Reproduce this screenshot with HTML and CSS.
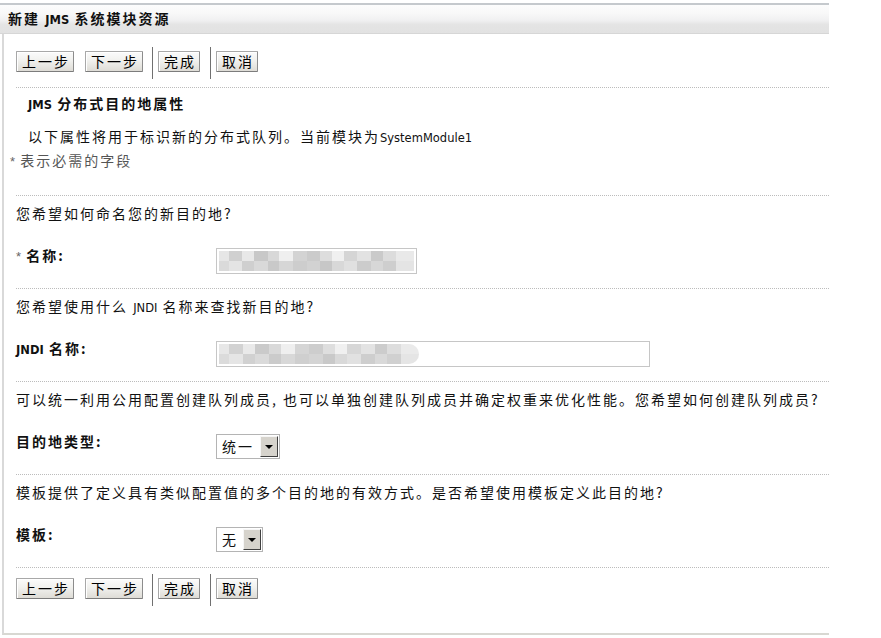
FILE: index.html
```html
<!DOCTYPE html>
<html lang="zh-CN">
<head>
<meta charset="utf-8">
<title>新建 JMS 系统模块资源</title>
<link rel="stylesheet" href="styles.css">
</head>
<body>
<div class="panel">
  <div class="header">
    <h1 class="title">新建 <span class="lat">JMS</span> 系统模块资源</h1>
  </div>
  <div class="content">
    <div class="toolbar">
      <button class="btn">上一步</button>
      <button class="btn gap-l">下一步</button>
      <span class="sep"></span>
      <button class="btn">完成</button>
      <span class="sep sep-wide"></span>
      <button class="btn">取消</button>
    </div>

    <div class="intro">
      <h2 class="subhead"><span class="lat">JMS</span> 分布式目的地属性</h2>
      <p class="desc">以下属性将用于标识新的分布式队列。当前模块为<span class="lat">SystemModule1</span></p>
      <p class="req"><span class="star">*</span> 表示必需的字段</p>
    </div>

    <div class="section">
      <p class="question">您希望如何命名您的新目的地?</p>
      <div class="field-row">
        <label class="label"><span class="star">*</span> 名称:</label>
        <div class="input input-name"><div class="blur"></div></div>
      </div>
    </div>

    <div class="section">
      <p class="question">您希望使用什么 <span class="lat">JNDI</span> 名称来查找新目的地?</p>
      <div class="field-row">
        <label class="label"><span class="lat">JNDI</span> 名称:</label>
        <div class="input input-jndi"><div class="blur blur-short"></div></div>
      </div>
    </div>

    <div class="section">
      <p class="question">可以统一利用公用配置创建队列成员, 也可以单独创建队列成员并确定权重来优化性能。您希望如何创建队列成员?</p>
      <div class="field-row">
        <label class="label">目的地类型:</label>
        <div class="select select-type"><span class="select-text">统一</span><span class="arrow"><span class="tri"></span></span></div>
      </div>
    </div>

    <div class="section">
      <p class="question">模板提供了定义具有类似配置值的多个目的地的有效方式。是否希望使用模板定义此目的地?</p>
      <div class="field-row">
        <label class="label">模板:</label>
        <div class="select select-tpl"><span class="select-text">无</span><span class="arrow"><span class="tri"></span></span></div>
      </div>
    </div>

    <div class="footer">
      <div class="toolbar">
        <button class="btn">上一步</button>
        <button class="btn gap-l">下一步</button>
        <span class="sep"></span>
        <button class="btn">完成</button>
        <span class="sep sep-wide"></span>
        <button class="btn">取消</button>
      </div>
    </div>
  </div>
</div>
</body>
</html>
```
FILE: styles.css
```css
* { box-sizing: border-box; }

body {
  margin: 0;
  background: #ffffff;
  color: #111111;
  font-family: "Noto Sans CJK SC", "Noto Sans", sans-serif;
  font-size: 14px;
  letter-spacing: 2px;
}

h1, h2, p { margin: 0; font-size: inherit; }

.lat {
  font-family: "DejaVu Sans", "Liberation Sans", sans-serif;
  font-size: 11.5px;
  letter-spacing: 0;
  line-height: 1;
}

.panel {
  width: 829px;
  padding-top: 3px;
}

.header {
  height: 31px;
  border-top: 2px solid #c5c9cd;
  border-bottom: 1px solid #d6d6d6;
  background: linear-gradient(#fcfcfc 0%, #f8f8f8 30%, #f0f0f1 55%, #e4e4e4 70%, #e2e2e2 100%);
  padding-left: 8px;
}

.title {
  font-weight: bold;
  line-height: 27px;
  height: 27px;
}

.content {
  margin-left: 2px;
  border-left: 2px solid #d9d9d9;
  border-bottom: 2px solid #d8d8d2;
  padding: 13px 0 0 12px;
}

.toolbar {
  display: flex;
  align-items: flex-start;
  height: 32px;
  margin-bottom: 8px;
}

.btn {
  font: inherit;
  letter-spacing: 2px;
  color: #000;
  height: 21px;
  margin: 4px 0 0;
  padding: 0 3px 0 5px;
  line-height: 19px;
  border: 1px solid #a8a8a8;
  border-bottom-color: #7c7c7c;
  border-right-color: #8c8c8c;
  border-radius: 1px;
  background: linear-gradient(#fbfbfb 0%, #f1f1ee 45%, #dedcd6 100%);
  box-shadow: inset 1px 1px 0 #ffffff;
}

.gap-l { margin-left: 11px; }

.sep {
  width: 1px;
  height: 32px;
  background: #707070;
  margin: 0 5px 0 9px;
}

.sep-wide { margin-left: 10px; }

.intro {
  border-top: 1px dotted #bcbcbc;
  padding: 5px 0 25px;
}

.subhead {
  font-weight: bold;
  line-height: 20px;
  height: 20px;
  padding-left: 12px;
}

.desc {
  margin-top: 13px;
  line-height: 20px;
  height: 20px;
  padding-left: 12px;
}

.req {
  margin-top: 4px;
  margin-left: -6px;
  line-height: 20px;
  height: 20px;
  color: #555555;
}

.star {
  font-family: "Liberation Sans", sans-serif;
  color: #666666;
  font-size: 13px;
  letter-spacing: 0;
  font-weight: normal;
  line-height: 1;
}

.section {
  border-top: 1px dotted #bcbcbc;
  padding: 7px 0 14px;
}

.question {
  line-height: 20px;
  height: 20px;
  white-space: nowrap;
}

.field-row {
  display: flex;
  align-items: flex-start;
  height: 26px;
  margin-top: 25px;
}

.label {
  flex: none;
  width: 200px;
  height: 20px;
  font-weight: bold;
  line-height: 20px;
  margin-top: -3px;
}

.input {
  height: 26px;
  border: 1px solid #c6c6c6;
  background: #ffffff;
  padding: 2px;
}

.input-name { width: 201px; }
.input-jndi { width: 434px; }

.blur {
  height: 100%;
  width: 100%;
  background:
    linear-gradient(90deg, #e6e6e6 0 5%, #d0d0d0 5% 12%, #e8e8e8 12% 18%, #c8c8c8 18% 25%, #d8d8d8 25% 31%, #efefef 31% 38%, #d3d3d3 38% 45%, #cbcbcb 45% 52%, #dddddd 52% 58%, #f0f0f0 58% 64%, #d5d5d5 64% 71%, #e2e2e2 71% 78%, #cacaca 78% 84%, #dcdcdc 84% 91%, #e9e9e9 91% 100%) top / 100% 50% no-repeat,
    linear-gradient(90deg, #dadada 0 5%, #e4e4e4 5% 12%, #cfcfcf 12% 18%, #d9d9d9 18% 25%, #c9c9c9 25% 31%, #d6d6d6 31% 38%, #cdcdcd 38% 45%, #d2d2d2 45% 52%, #c7c7c7 52% 58%, #d8d8d8 58% 64%, #e0e0e0 64% 71%, #cccccc 71% 78%, #d7d7d7 78% 84%, #cecece 84% 91%, #e4e4e4 91% 100%) bottom / 100% 50% no-repeat;
}

.blur-short {
  width: 200px;
  border-radius: 0 10px 10px 0;
  opacity: 0.95;
}

.select {
  display: flex;
  height: 25px;
  border: 1px solid #b4b4b4;
  background: #ffffff;
}

.select-type { width: 64px; }
.select-tpl { width: 47px; }

.select-text {
  flex: 1;
  line-height: 23px;
  padding-left: 5px;
}

.arrow {
  flex: none;
  width: 18px;
  margin: 1px 1px 1px 0;
  background: #d6d3cc;
  border: 1px solid;
  border-color: #f6f6f6 #404040 #404040 #f6f6f6;
  display: flex;
  align-items: center;
  justify-content: center;
}

.tri {
  width: 0;
  height: 0;
  border-left: 4px solid transparent;
  border-right: 4px solid transparent;
  border-top: 4px solid #000000;
}

.footer {
  border-top: 1px dotted #bcbcbc;
  padding: 6px 0 27px;
}

.footer .toolbar { margin-bottom: 0; }
```
